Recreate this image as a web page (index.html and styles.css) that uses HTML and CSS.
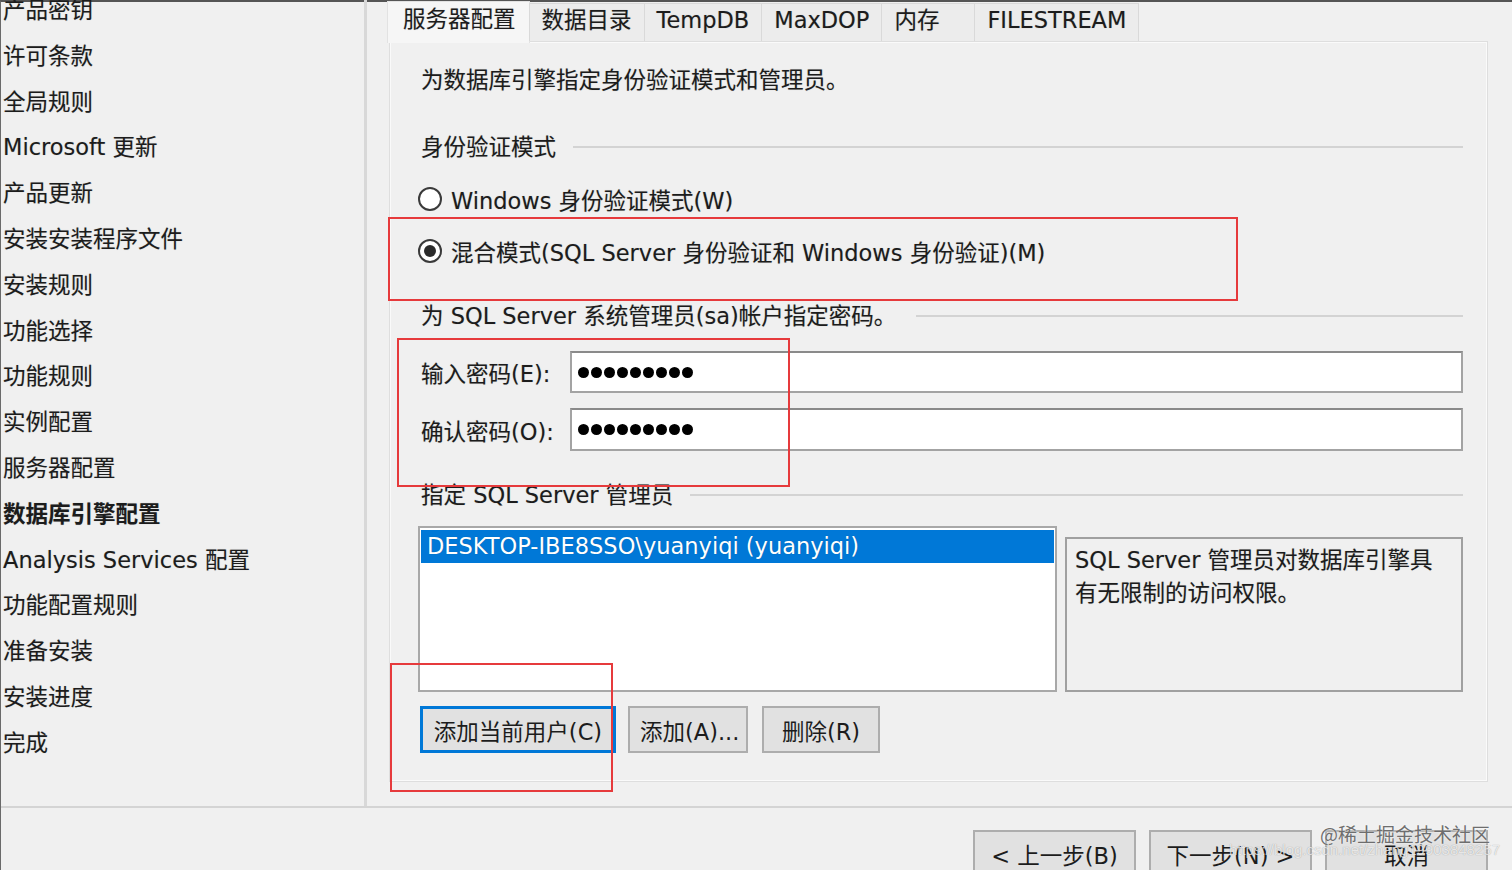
FILE: index.html
```html
<!DOCTYPE html>
<html lang="zh-CN">
<head>
    <meta charset="UTF-8">
    <meta name="viewport" content="width=device-width, initial-scale=1.0">
    <title>SQL Server 安装程序 - 数据库引擎配置</title>
    <link rel="stylesheet" href="styles.css">
</head>
<body>
    <div class="window">
        <div class="main">
            <ul class="steps">
                <li>产品密钥</li>
                <li>许可条款</li>
                <li>全局规则</li>
                <li>Microsoft 更新</li>
                <li>产品更新</li>
                <li>安装安装程序文件</li>
                <li>安装规则</li>
                <li>功能选择</li>
                <li>功能规则</li>
                <li>实例配置</li>
                <li>服务器配置</li>
                <li class="current">数据库引擎配置</li>
                <li>Analysis Services 配置</li>
                <li>功能配置规则</li>
                <li>准备安装</li>
                <li>安装进度</li>
                <li>完成</li>
            </ul>
            <div class="content">
                <div class="tabs">
                    <div class="tab active">服务器配置</div>
                    <div class="tab">数据目录</div>
                    <div class="tab">TempDB</div>
                    <div class="tab">MaxDOP</div>
                    <div class="tab tab-wide">内存</div>
                    <div class="tab">FILESTREAM</div>
                </div>
                <div class="page">
                    <p class="intro">为数据库引擎指定身份验证模式和管理员。</p>
                    <div class="group group-auth"><span>身份验证模式</span></div>
                    <label class="radio radio-first"><span class="circle"></span>Windows 身份验证模式(W)</label>
                    <label class="radio checked"><span class="circle"></span>混合模式(SQL Server 身份验证和 Windows 身份验证)(M)</label>
                    <div class="group group-pass"><span>为 SQL Server 系统管理员(sa)帐户指定密码。</span></div>
                    <div class="field field-first">
                        <span class="field-label">输入密码(E):</span>
                        <div class="input"><i></i><i></i><i></i><i></i><i></i><i></i><i></i><i></i><i></i></div>
                    </div>
                    <div class="field field-second">
                        <span class="field-label">确认密码(O):</span>
                        <div class="input"><i></i><i></i><i></i><i></i><i></i><i></i><i></i><i></i><i></i></div>
                    </div>
                    <div class="group group-admin"><span>指定 SQL Server 管理员</span></div>
                    <div class="admins">
                        <div class="listbox">
                            <div class="item selected">DESKTOP-IBE8SSO\yuanyiqi (yuanyiqi)</div>
                        </div>
                        <div class="note">SQL Server 管理员对数据库引擎具<br>有无限制的访问权限。</div>
                    </div>
                    <div class="actions">
                        <button class="btn focused">添加当前用户(C)</button>
                        <button class="btn">添加(A)...</button>
                        <button class="btn">删除(R)</button>
                    </div>
                </div>
            </div>
        </div>
        <div class="footer">
            <button class="btn nav">&lt; 上一步(B)</button>
            <button class="btn nav">下一步(N) &gt;</button>
            <button class="btn nav">取消</button>
            <span class="mark">@稀土掘金技术社区</span>
            <span class="url">https://blog.csdn.net/zhang19903848257</span>
        </div>
        <div class="highlight hl-mode"></div>
        <div class="highlight hl-pass"></div>
        <div class="highlight hl-add"></div>
    </div>
</body>
</html>
```

FILE: styles.css
```css
body {
    margin: 0;
    background-color: #f0f0f0;
    font-family: "DejaVu Sans", "Noto Sans CJK SC", sans-serif;
    font-size: 22.5px;
    color: #1c1c1c;
    text-shadow: 0 0 1px rgba(0, 0, 0, 0.25);
    overflow: hidden;
}
.window {
    position: relative;
    height: 868px;
    border-top: 2px solid #555;
    border-left: 1px solid #6a6a6a;
}
.main {
    display: flex;
    height: 804px;
}
.steps {
    list-style: none;
    margin: -14px 0 0 0;
    padding: 0 0 0 2px;
    width: 361px;
    border-right: 3px solid #d8d8d8;
    line-height: 45.8px;
    white-space: nowrap;
}
.steps .current {
    font-weight: bold;
}
.content {
    flex: 1;
    padding: 0 24px 0 20px;
    display: flex;
    flex-direction: column;
}
.tabs {
    display: flex;
    height: 39px;
    align-items: flex-end;
    position: relative;
    z-index: 1;
}
.tab {
    height: 37px;
    line-height: 33px;
    padding: 0 12px;
    border: 1px solid #d9d9d9;
    border-bottom: none;
    margin-left: -1px;
    background-color: #ececec;
}
.tab.active {
    height: 41px;
    line-height: 34px;
    margin-left: 0;
    margin-bottom: -2px;
    padding: 0 13px 0 15px;
    background-color: #f6f6f6;
    border-color: #e2e2e2;
}
.tab-wide {
    padding-right: 35px;
}
.page {
    flex: 1;
    margin: 0 0 24px 2px;
    border: 1px solid #dedede;
    box-shadow: inset 0 0 0 1px #fafafa;
    padding: 18px 24px 0 31px;
    display: flex;
    flex-direction: column;
}
.intro {
    margin: 0;
    height: 40px;
    line-height: 40px;
}
.group {
    display: flex;
    align-items: center;
    height: 40px;
    white-space: nowrap;
}
.group::after {
    content: "";
    flex: 1;
    height: 2px;
    margin: 3px 0 0 17px;
    background-color: #d3d3d3;
}
.group-auth {
    margin-top: 25px;
}
.group-pass {
    margin-top: 23px;
}
.group-pass::after {
    margin-left: 20px;
}
.group-admin {
    margin-top: 22px;
}
.radio {
    display: flex;
    align-items: center;
    height: 40px;
    margin: 12px 0 0 -3px;
}
.radio-first {
    margin-top: 14px;
}
.circle {
    width: 20px;
    height: 20px;
    border: 2px solid #3a3a3a;
    border-radius: 50%;
    background-color: #fff;
    margin-right: 9px;
    display: flex;
    align-items: center;
    justify-content: center;
}
.checked .circle::after {
    content: "";
    width: 12px;
    height: 12px;
    border-radius: 50%;
    background-color: #2a2a2a;
}
.field {
    display: flex;
    align-items: center;
    height: 42px;
}
.field-first {
    margin-top: 17px;
}
.field-second {
    margin-top: 15px;
    height: 43px;
}
.field-label {
    width: 149px;
    flex-shrink: 0;
}
.input {
    flex: 1;
    align-self: stretch;
    background-color: #fff;
    border: 2px solid #a3a3a3;
    border-top-color: #8a8a8a;
    display: flex;
    align-items: center;
    gap: 2px;
    padding-left: 6px;
}
.input i {
    width: 11px;
    height: 11px;
    border-radius: 50%;
    background-color: #000;
}
.admins {
    display: flex;
    align-items: flex-end;
    margin: 15px 0 0 -3px;
    height: 164px;
    gap: 8px;
}
.listbox {
    width: 633px;
    height: 160px;
    background-color: #fff;
    border: 2px solid #a8a8a8;
    padding: 2px 1px 0 1px;
}
.item {
    height: 33px;
    line-height: 33px;
    padding-left: 6px;
    white-space: nowrap;
}
.item.selected {
    background-color: #0078d7;
    color: #fff;
}
.note {
    flex: 1;
    height: 146px;
    border: 2px solid #a0a0a0;
    padding: 5px 0 0 8px;
    line-height: 33px;
}
.actions {
    display: flex;
    gap: 12px;
    margin: 14px 0 0 -1px;
}
.btn {
    font: inherit;
    color: inherit;
    background-color: #e1e1e1;
    border: 2px solid #adadad;
    height: 47px;
    padding: 0 10px;
    white-space: nowrap;
}
.actions .btn:nth-child(2) {
    width: 120px;
}
.actions .btn:nth-child(3) {
    width: 118px;
    margin-left: 2px;
}
.btn.focused {
    width: 196px;
    border: 3px solid #0078d7;
}
.footer {
    position: relative;
    border-top: 2px solid #d4d4d4;
    display: flex;
    justify-content: flex-end;
    gap: 13px;
    padding: 22px 24px 0 0;
}
.btn.nav {
    width: 163px;
    height: 48px;
}
.mark {
    position: absolute;
    right: 22px;
    top: 12px;
    font-size: 19px;
    font-family: "Noto Sans CJK SC", sans-serif;
    color: #6e6e6e;
    text-shadow: 0 0 2px #fff;
}
.url {
    position: absolute;
    right: 12px;
    top: 33px;
    font-size: 15px;
    font-family: "Liberation Sans", sans-serif;
    color: rgba(255, 255, 255, 0.75);
    text-shadow: 0 0 1px rgba(0, 0, 0, 0.35);
}
.highlight {
    position: absolute;
    border: 2px solid #e63a3c;
}
.hl-mode {
    left: 387px;
    top: 215px;
    width: 846px;
    height: 80px;
}
.hl-pass {
    left: 396px;
    top: 336px;
    width: 389px;
    height: 145px;
}
.hl-add {
    left: 389px;
    top: 661px;
    width: 219px;
    height: 125px;
}
```
